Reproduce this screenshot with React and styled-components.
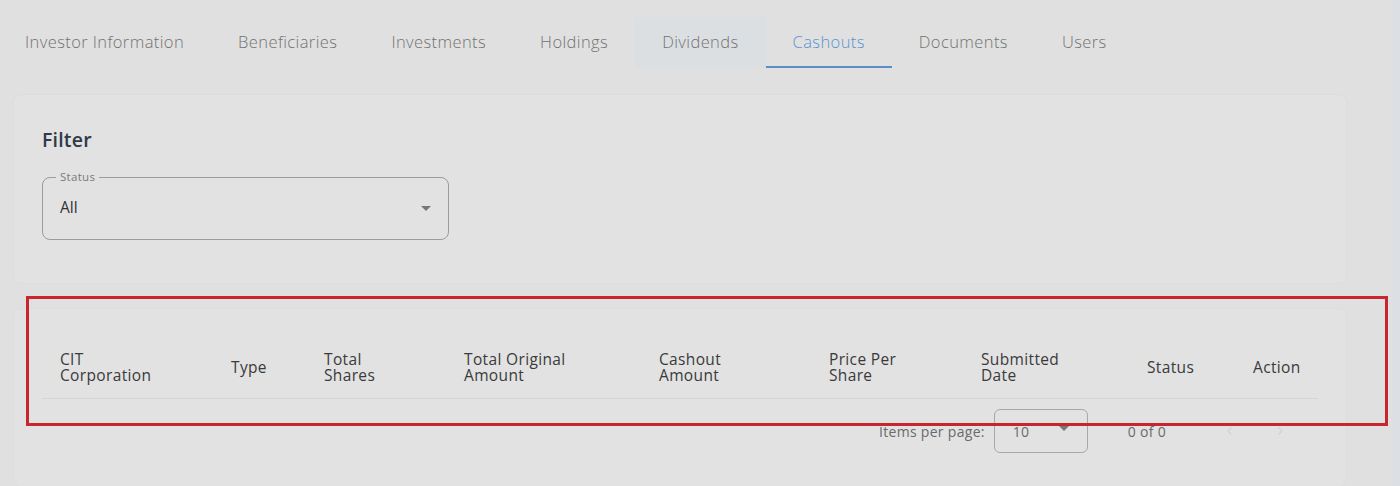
import React from "react";
import styled, { createGlobalStyle } from "styled-components";

const GlobalStyle = createGlobalStyle`
    html, body {
        margin: 0;
        padding: 0;
        background: #e0e0e0;
        font-family: "Open Sans", "Liberation Sans", sans-serif;
    }
`;

const Page = styled.div`
    position: relative;
    display: flex;
    width: 1400px;
    height: 486px;
    overflow: hidden;
    background: #e0e0e0;
`;

const Main = styled.div`
    flex: 1;
    display: flex;
    flex-direction: column;
`;

const ScrollTrack = styled.div`
    width: 8px;
    background: #dcdfe3;
`;

const Tabs = styled.div`
    display: flex;
    margin: 17px 0 0 -2px;
    height: 51px;
`;

const Tab = styled.div`
    display: flex;
    align-items: center;
    padding: 0 27px;
    font-size: 16.5px;
    letter-spacing: 0.4px;
    font-weight: 300;
    color: ${(p) => (p.$active ? "#5a93cf" : "#727272")};
    background: ${(p) => (p.$hover ? "#dcdfe2" : "transparent")};
    border-bottom: 2px solid ${(p) => (p.$active ? "#5a8fc6" : "transparent")};
    box-sizing: border-box;
    white-space: nowrap;
`;

const Card = styled.div`
    margin: ${(p) => p.$top}px 46px 0 14px;
    background: #e2e2e2;
    border-radius: 6px;
    box-shadow: 0 0 2px rgba(0, 0, 0, 0.06);
`;

const FilterCard = styled(Card)`
    height: 188px;
    padding: 31px 28px 0;
    box-sizing: border-box;
`;

const FilterTitle = styled.div`
    font-size: 19.5px;
    font-weight: 600;
    color: #2f3a48;
    line-height: 28px;
    letter-spacing: 0.2px;
`;

const Field = styled.fieldset`
    margin: 17px 0 0;
    width: 407px;
    height: 69px;
    box-sizing: border-box;
    border: 1px solid #9c9c9c;
    border-radius: 8px;
    padding: 0 17px;
    display: flex;
    align-items: center;
    justify-content: space-between;
`;

const Legend = styled.legend`
    font-size: 11.5px;
    color: #7a7a7a;
    padding: 0 4px;
    margin-left: -4px;
    line-height: 12px;
    letter-spacing: 0.3px;
`;

const FieldValue = styled.span`
    font-size: 15.5px;
    color: #333;
    margin-top: -8px;
`;

const Caret = styled.span`
    width: 0;
    height: 0;
    border-left: 5px solid transparent;
    border-right: 5px solid transparent;
    border-top: 5px solid #777;
    margin: -6px 0 0;
`;

const TableCard = styled(Card)`
    flex: 1;
    padding: 0 28px;
`;

const HeaderRow = styled.div`
    display: grid;
    grid-template-columns: 171px 93px 140px 195px 170px 152px 166px 106px 1fr;
    align-items: center;
    margin-top: 27px;
    height: 62px;
    padding-left: 18px;
    border-bottom: 1px solid #d4d4d4;
`;

const HeadCell = styled.div`
    font-size: 15.5px;
    line-height: 16px;
    letter-spacing: 0.35px;
    color: #3a3a3a;
    font-weight: 400;
    white-space: nowrap;
`;

const Paginator = styled.div`
    display: flex;
    align-items: center;
    justify-content: flex-end;
    height: 64px;
    padding-right: 18px;
    font-size: 14px;
    letter-spacing: 0.3px;
    color: #6a6a6a;
`;

const PageSize = styled.div`
    display: flex;
    align-items: center;
    justify-content: space-between;
    margin-left: 9px;
    width: 94px;
    height: 44px;
    box-sizing: border-box;
    border: 1px solid #a8a8a8;
    border-radius: 6px;
    padding: 0 18px;
`;

const RangeLabel = styled.span`
    margin: 0 44px 0 40px;
`;

const NavButton = styled.div`
    width: 40px;
    height: 40px;
    display: flex;
    align-items: center;
    justify-content: center;
    color: #d2d2d2;
    margin-left: ${(p) => (p.$gap ? 10 : 0)}px;
`;

const Highlight = styled.div`
    position: absolute;
    left: 26px;
    top: 296px;
    width: 1362px;
    height: 130px;
    box-sizing: border-box;
    border: 3px solid #c9252e;
    pointer-events: none;
`;

const tabs = [
    "Investor Information",
    "Beneficiaries",
    "Investments",
    "Holdings",
    "Dividends",
    "Cashouts",
    "Documents",
    "Users",
];

const columns = [
    ["CIT", "Corporation"],
    ["Type"],
    ["Total", "Shares"],
    ["Total Original", "Amount"],
    ["Cashout", "Amount"],
    ["Price Per", "Share"],
    ["Submitted", "Date"],
    ["Status"],
    ["Action"],
];

function Chevron({ dir }) {
    return (
        <svg width="12" height="12" viewBox="0 0 24 24" fill="none" stroke="currentColor" strokeWidth="2.5">
            <path d={dir === "left" ? "M15 5l-7 7 7 7" : "M9 5l7 7-7 7"} />
        </svg>
    );
}

export default function App() {
    return (
        <Page>
            <GlobalStyle />
            <Main>
                <Tabs>
                    {tabs.map((t) => (
                        <Tab key={t} $active={t === "Cashouts"} $hover={t === "Dividends"}>
                            {t}
                        </Tab>
                    ))}
                </Tabs>

                <FilterCard $top={27}>
                    <FilterTitle>Filter</FilterTitle>
                    <Field>
                        <Legend>Status</Legend>
                        <FieldValue>All</FieldValue>
                        <Caret />
                    </Field>
                </FilterCard>

                <TableCard $top={26}>
                    <HeaderRow>
                        {columns.map((c) => (
                            <HeadCell key={c.join(" ")}>
                                {c.map((line) => (
                                    <div key={line}>{line}</div>
                                ))}
                            </HeadCell>
                        ))}
                    </HeaderRow>
                    <Paginator>
                        <span>Items per page:</span>
                        <PageSize>
                            <span>10</span>
                            <Caret />
                        </PageSize>
                        <RangeLabel>0 of 0</RangeLabel>
                        <NavButton>
                            <Chevron dir="left" />
                        </NavButton>
                        <NavButton $gap>
                            <Chevron dir="right" />
                        </NavButton>
                    </Paginator>
                </TableCard>
            </Main>
            <ScrollTrack />
            <Highlight />
        </Page>
    );
}
